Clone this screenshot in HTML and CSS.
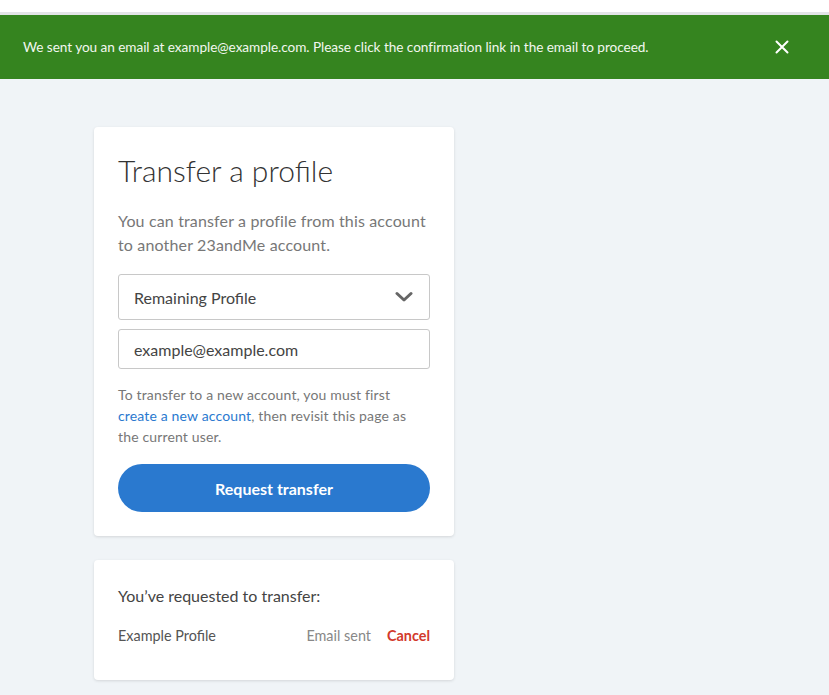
FILE: index.html
```html
<!DOCTYPE html>
<html lang="en">
<head>
    <meta charset="UTF-8">
    <meta name="viewport" content="width=device-width, initial-scale=1.0">
    <title>Transfer a profile</title>
    <link rel="stylesheet" href="styles.css">
</head>
<body>
    <div class="topbar"></div>

    <div class="banner">
        <p>We sent you an email at example@example.com. Please click the confirmation link in the email to proceed.</p>
        <button class="banner-close" type="button" aria-label="Close">
            <svg width="14" height="14" viewBox="0 0 14 14">
                <path d="M1.5 1.5 L12.5 12.5 M12.5 1.5 L1.5 12.5" stroke="#fff" stroke-width="2" stroke-linecap="round"/>
            </svg>
        </button>
    </div>

    <div class="main">
        <div class="card">
            <h1>Transfer a profile</h1>
            <p class="intro">You can transfer a profile from this account to another 23andMe account.</p>

            <form class="transfer-form">
                <div class="select-box">
                    <span>Remaining Profile</span>
                    <svg width="18" height="12" viewBox="0 0 18 12">
                        <path d="M2 2.5 L9 9 L16 2.5" fill="none" stroke="#666" stroke-width="3" stroke-linecap="round" stroke-linejoin="round"/>
                    </svg>
                </div>
                <input class="text-input" type="text" value="example@example.com">

                <p class="note">To transfer to a new account, you must first <a href="#">create a new account</a>, then revisit this page as the current user.</p>

                <button class="btn-primary" type="button">Request transfer</button>
            </form>
        </div>

        <div class="card card-requests">
            <h2>You’ve requested to transfer:</h2>
            <div class="request-row">
                <span class="request-name">Example Profile</span>
                <span class="request-status">Email sent</span>
                <a class="request-cancel" href="#">Cancel</a>
            </div>
        </div>
    </div>
</body>
</html>
```

FILE: styles.css
```css
body {
    margin: 0;
    font-family: Lato, "Open Sans", sans-serif;
    background-color: #f0f4f7;
    color: #333;
}

.topbar {
    height: 12px;
    background-color: #fff;
    border-bottom: 3px solid #e2e4e7;
}

.banner {
    height: 64px;
    background-color: #35841f;
    display: flex;
    align-items: center;
    justify-content: space-between;
    padding: 0 40px 0 23px;
}

.banner p {
    margin: 0;
    color: #f2f7ef;
    font-size: 13.6px;
    letter-spacing: -0.05px;
}

.banner-close {
    background: none;
    border: none;
    padding: 0;
    display: flex;
    cursor: pointer;
}

.main {
    padding: 48px 94px;
    display: flex;
    flex-direction: column;
    gap: 24px;
}

.card {
    width: 312px;
    background-color: #fff;
    border-radius: 4px;
    box-shadow: 0 1px 3px rgba(0, 0, 0, 0.12);
    padding: 24px;
}

h1 {
    margin: 0;
    font-size: 30px;
    font-weight: 300;
    line-height: 38px;
    color: #333;
}

.intro {
    margin: 20px 0 17px;
    font-size: 16px;
    line-height: 24px;
    color: #777;
    letter-spacing: 0.15px;
}

.select-box {
    height: 44px;
    border: 1px solid #c8c8c8;
    border-radius: 3px;
    display: flex;
    align-items: center;
    justify-content: space-between;
    padding: 0 16px 0 15px;
    font-size: 16px;
    color: #444;
}

.text-input {
    display: block;
    width: 100%;
    height: 40px;
    margin-top: 9px;
    padding: 0 15px;
    border: 1px solid #c8c8c8;
    border-radius: 3px;
    box-sizing: border-box;
    font-family: inherit;
    font-size: 16px;
    color: #444;
}

.note {
    margin: 15px 0 17px;
    font-size: 14px;
    line-height: 21px;
    letter-spacing: 0.15px;
    color: #777;
}

.note a {
    color: #2a79cf;
    text-decoration: none;
}

.btn-primary {
    width: 100%;
    height: 48px;
    border: none;
    border-radius: 24px;
    background-color: #2a79cf;
    color: #fff;
    font-family: inherit;
    font-size: 16px;
    font-weight: 700;
    cursor: pointer;
}

.card-requests {
    padding-bottom: 34px;
}

h2 {
    margin: 0;
    font-size: 16px;
    font-weight: 400;
    line-height: 24px;
    color: #444;
}

.request-row {
    display: flex;
    align-items: center;
    margin-top: 18px;
    font-size: 14.4px;
    line-height: 20px;
}

.request-name {
    flex: 1;
    color: #555;
}

.request-status {
    color: #888;
    margin-right: 16px;
}

.request-cancel {
    color: #d2392c;
    font-weight: 700;
    text-decoration: none;
}
```
